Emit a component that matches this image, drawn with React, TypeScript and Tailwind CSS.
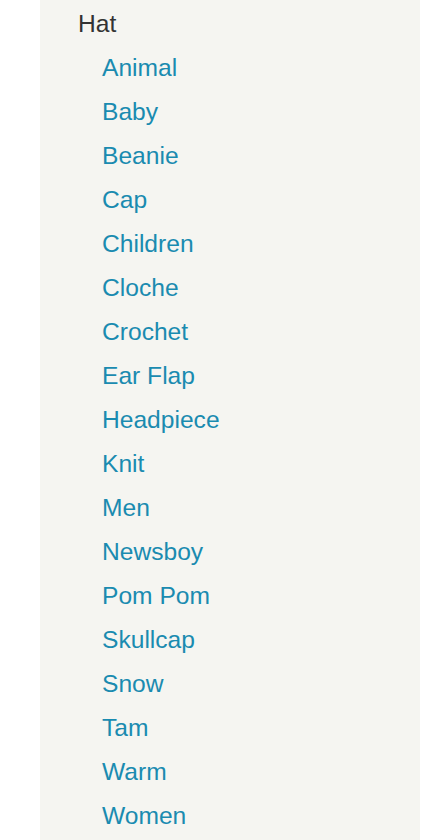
export default function App() {
  const items = [
    "Animal","Baby","Beanie","Cap","Children","Cloche","Crochet","Ear Flap","Headpiece","Knit","Men","Newsboy","Pom Pom","Skullcap","Snow","Tam","Warm","Women",
  ];
  return (
    <div className="min-h-[840px] bg-white" style={{ fontFamily: '"Liberation Sans", Arial, sans-serif' }}>
      <div className="ml-[40px] w-[380px] min-h-[840px] bg-[#f5f5f1] pt-[2px]">
        <ul>
          <li>
            <div className="pl-[38px] text-[24.6px] leading-[44px] text-[#333333]">Hat</div>
            <ul>
              {items.map((it) => (
                <li key={it} className="pl-[62px] text-[24.6px] leading-[44px]">
                  <a className="text-[#1a8bb0]">{it}</a>
                </li>
              ))}
            </ul>
          </li>
        </ul>
      </div>
    </div>
  );
}
